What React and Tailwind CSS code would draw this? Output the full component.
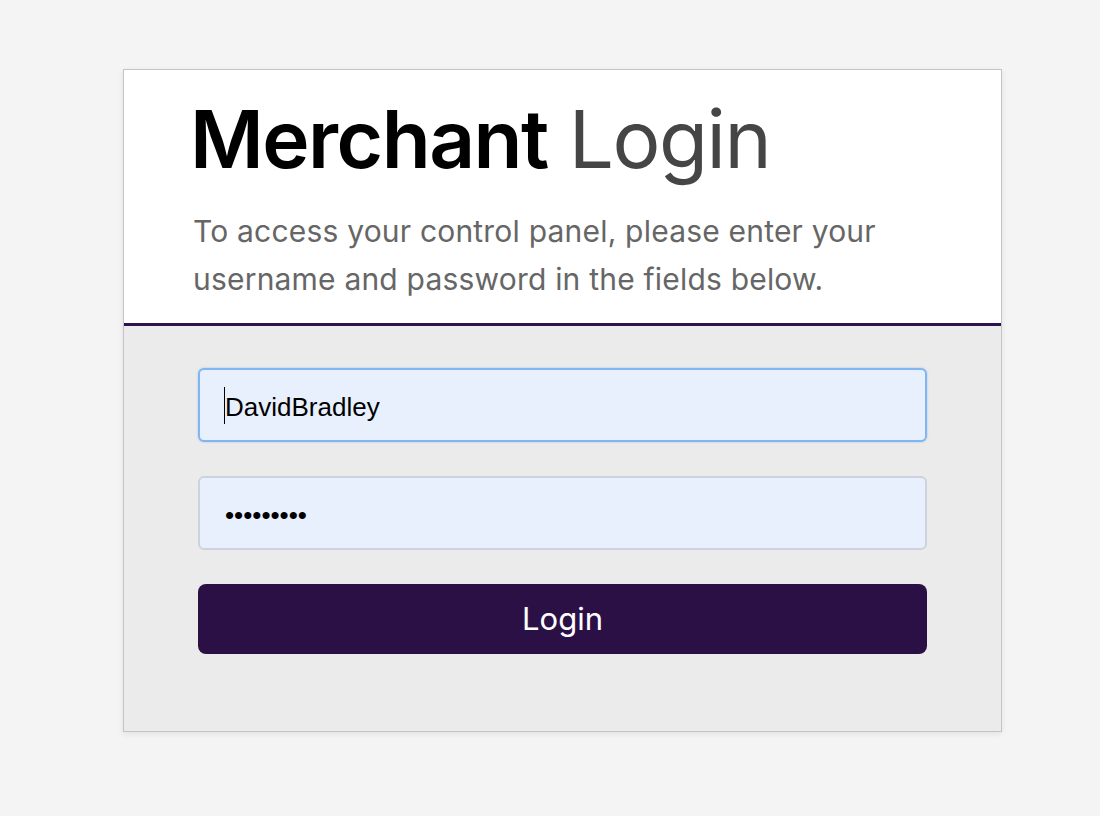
export default function App() {
  return (
    <div className="min-h-[816px] bg-[#f4f4f4] pt-[69px] pl-[123px]" style={{ fontFamily: "Inter, 'Noto Sans', sans-serif" }}>
      <div className="w-[879px] border border-[#c4c4c4] bg-[#ebebeb] shadow-[0_2px_6px_rgba(0,0,0,0.08)]">
        <div className="bg-white pl-[66px] pr-[60px] pt-[22px] pb-[20px] border-b-[3px] border-[#2c1250]">
          <h1 className="text-[80px] leading-[94px] tracking-[-1.5px]">
            <span className="font-semibold text-black">Merchant</span>{" "}
            <span className="font-normal text-[#454545]">Login</span>
          </h1>
          <p className="mt-[21px] pl-[3px] text-[30px] leading-[48px] tracking-[0.2px] text-[#666666]">
            To access your control panel, please enter your username and password in the fields below.
          </p>
        </div>
        <div className="px-[74px] pt-[42px] pb-[77px] flex flex-col gap-[34px]">
          <div className="relative">
            <input
              type="text"
              defaultValue="DavidBradley"
              className="h-[74px] w-full rounded-[6px] border-2 border-[#80b6f2] bg-[#e8f0fe] px-[25px] pt-[4px] text-[26px] text-black outline-none caret-transparent shadow-[0_0_2px_rgba(90,150,230,0.5)]"
              style={{ fontFamily: "'Liberation Sans', Arial, sans-serif" }}
            />
            <span className="absolute left-[26px] top-[19px] h-[37px] w-[1px] bg-black" />
          </div>
          <input
            type="password"
            defaultValue="passwords"
            className="h-[74px] w-full rounded-[6px] border-2 border-[#cdd3dc] bg-[#e8f0fe] px-[25px] pt-[4px] text-[26px] text-black outline-none"
            style={{ fontFamily: "'Liberation Sans', Arial, sans-serif" }}
          />
          <button className="h-[70px] w-full rounded-[8px] bg-[#2b1046] text-[31px] text-white">
            Login
          </button>
        </div>
      </div>
    </div>
  );
}
